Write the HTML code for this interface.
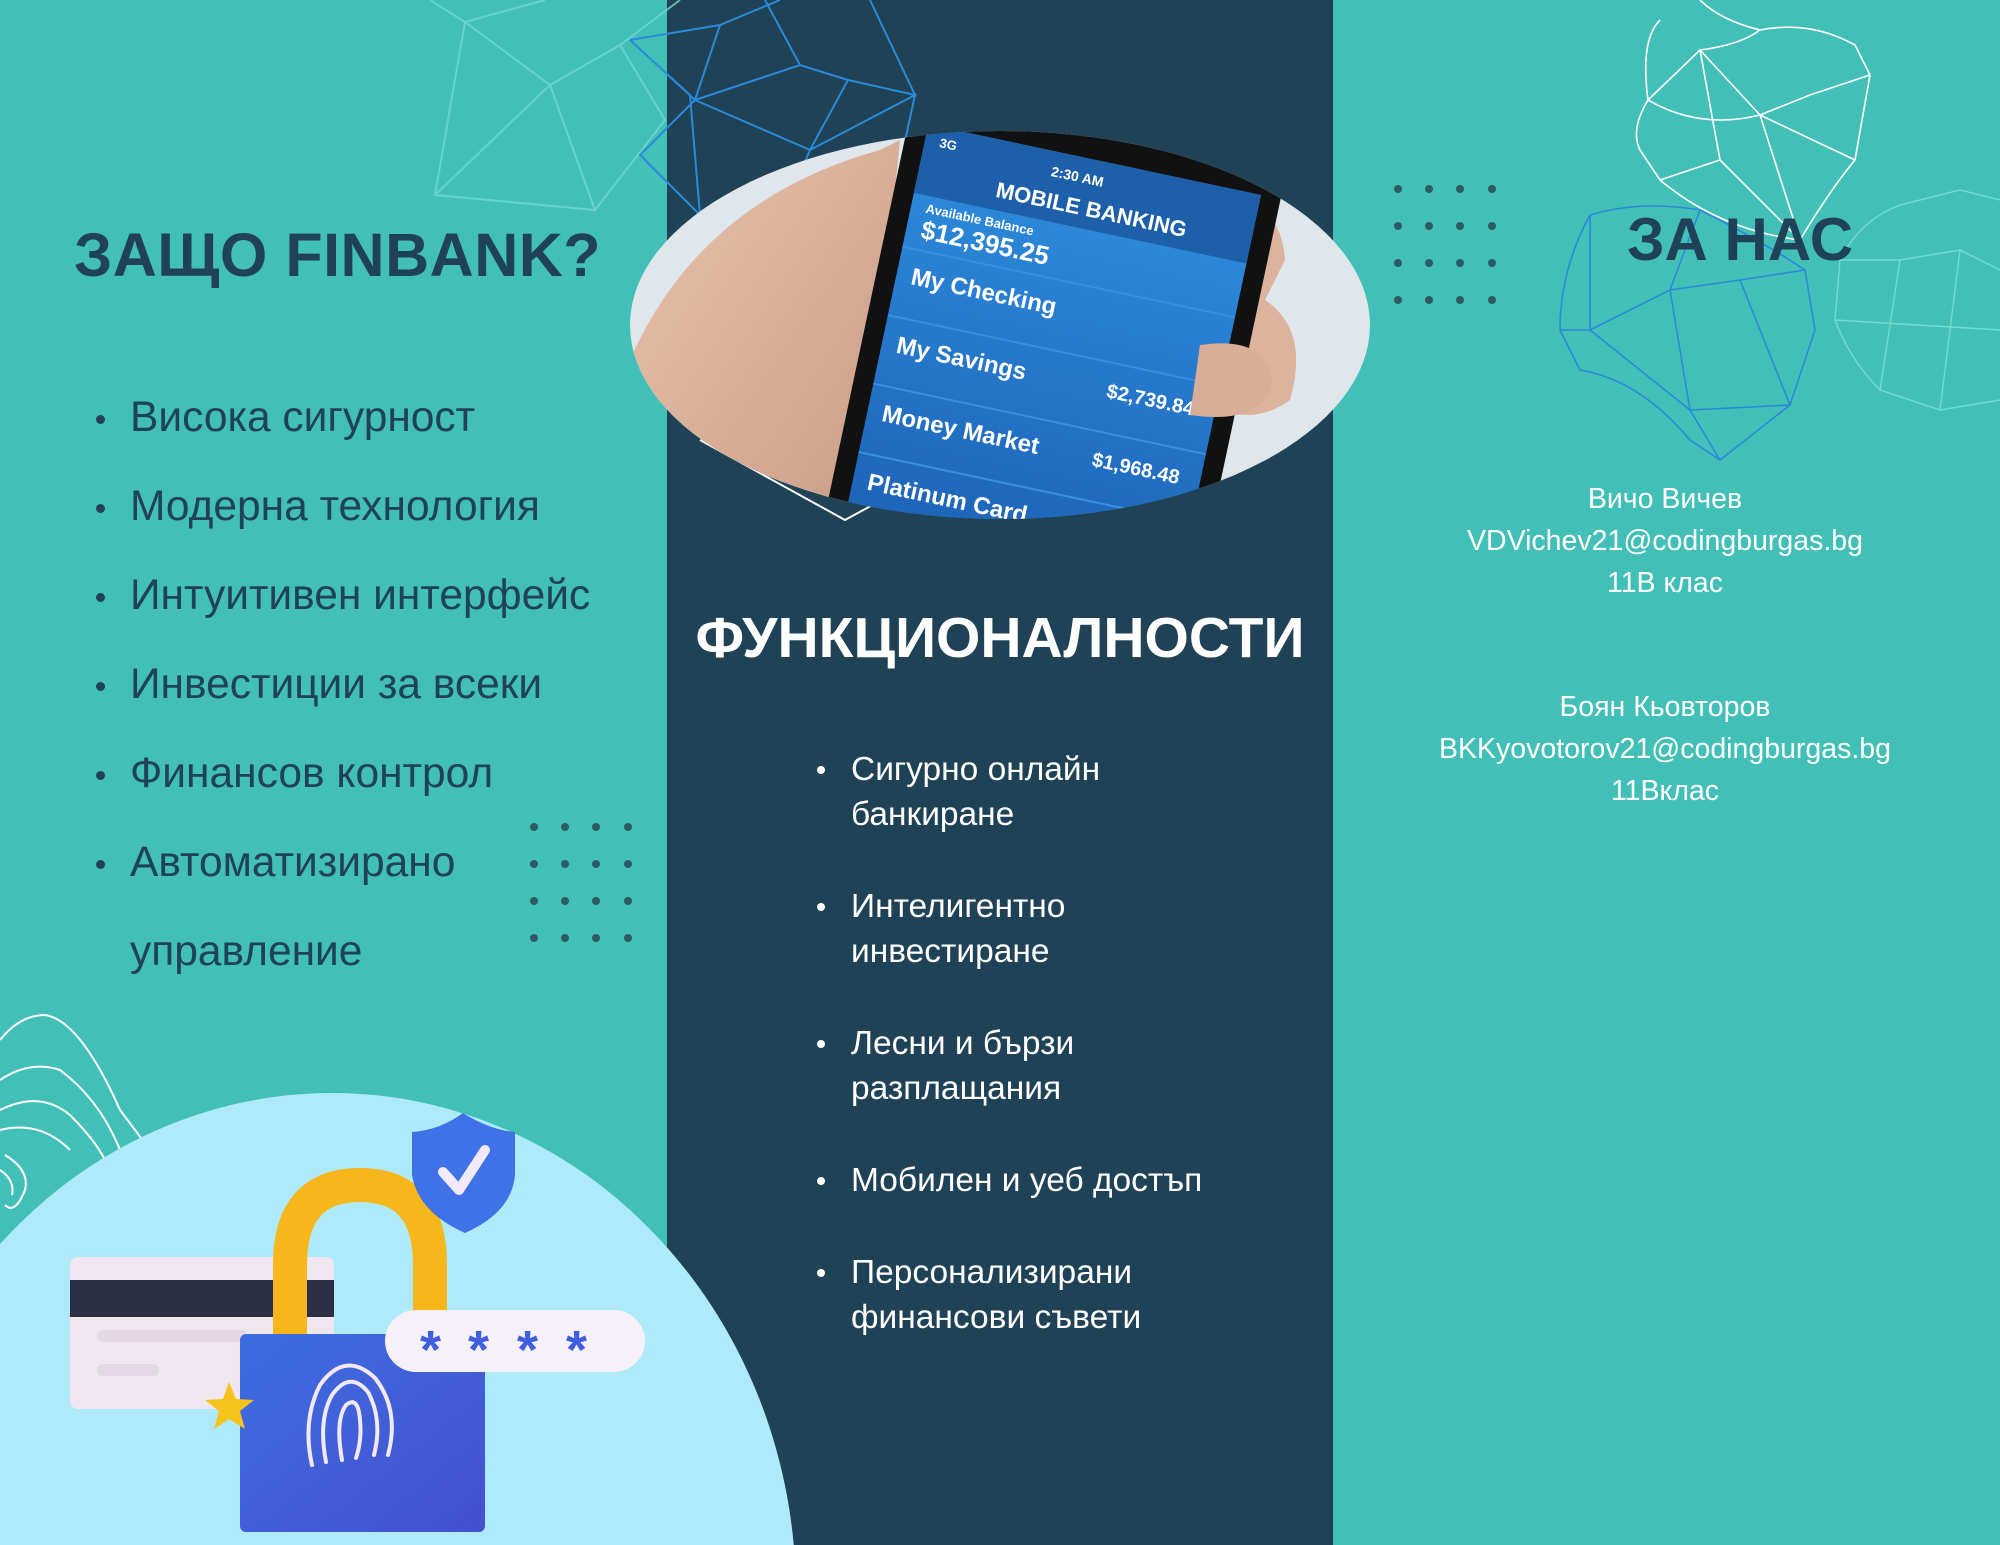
<!DOCTYPE html>
<html><head><meta charset="utf-8"><style>
*{margin:0;padding:0;box-sizing:border-box}
html,body{width:2000px;height:1545px;overflow:hidden}
body{position:relative;background:#42c0b8;font-family:"Liberation Sans","DejaVu Sans",sans-serif}
.abs{position:absolute}
svg{position:absolute;left:0;top:0}
.h1{left:74px;top:220px;font-size:61px;font-weight:bold;color:#1f4256;letter-spacing:0.5px}
ul.l1{left:96px;top:390px;list-style:none;color:#1f4256;font-size:42.5px}
ul.l1 li{height:89px;line-height:56px;position:relative;padding-left:34px}
ul.l1 li:before{content:"";position:absolute;left:0;top:25px;width:9px;height:9px;border-radius:50%;background:#1f4256}
.h2{left:690px;top:605px;width:620px;text-align:center;font-size:57px;font-weight:bold;color:#fff}
ul.l2{left:815px;top:747px;list-style:none;color:#fff;font-size:33.5px;line-height:45px}
ul.l2 li{position:relative;padding-left:36px;margin-bottom:47px}
ul.l2 li:before{content:"";position:absolute;left:2px;top:19px;width:8px;height:8px;border-radius:50%;background:#fff}
.h3{left:1540px;top:205px;width:400px;text-align:center;font-size:60px;font-weight:bold;color:#1f4256}
.info{left:1400px;width:530px;text-align:center;color:#fff;font-size:28.5px;line-height:42px}
</style></head><body>
<svg width="2000" height="1545" viewBox="0 0 2000 1545">
<defs>
<clipPath id="ph"><ellipse cx="1000" cy="325" rx="370" ry="194"/></clipPath>
<linearGradient id="sk" x1="0" y1="0" x2="1" y2="1"><stop offset="0" stop-color="#e8c4ae"/><stop offset="1" stop-color="#c99a84"/></linearGradient>
<linearGradient id="bl" x1="0" y1="0" x2="0" y2="1"><stop offset="0" stop-color="#2f8fe0"/><stop offset="1" stop-color="#1a5bb0"/></linearGradient>
<linearGradient id="lk" x1="0" y1="0" x2="1" y2="1"><stop offset="0" stop-color="#3d6ee0"/><stop offset="1" stop-color="#4550d0"/></linearGradient>
<g id="dg"><circle cx="0" cy="0" r="4"/><circle cx="31" cy="0" r="4"/><circle cx="62" cy="0" r="4"/><circle cx="94" cy="0" r="4"/></g>
</defs>
<rect x="667" y="0" width="666" height="1545" fill="#1f4256"/>
<g fill="none" stroke="#6fd6d0" stroke-width="2" opacity=".8">
<path d="M430 0 L465 22 L435 195 L595 210 L550 85 L465 22 M550 85 L620 45 L680 0 M550 85 L595 210 L665 120 L620 45 M465 22 L545 0 M435 195 L550 85"/>
</g>
<g fill="none" stroke="#2a8ad8" stroke-width="2">
<path d="M630 40 L720 25 L780 0 M720 25 L695 100 L630 40 L690 95 L700 215 M695 100 L800 65 L848 80 L810 150 L695 100 M800 65 L765 0 M848 80 L915 95 L870 0 M810 150 L915 95 L890 210 M810 150 L785 210 M700 215 L640 155 L695 100"/>
</g>
<path d="M700 440 L845 520 L900 490" fill="none" stroke="#fff" stroke-width="2"/>
<g clip-path="url(#ph)">
<rect x="620" y="120" width="760" height="420" fill="#dfe6ec"/>
<path d="M630 360 Q700 200 880 150 L900 140 L860 540 L640 540 Z" fill="url(#sk)"/>
<path d="M1200 190 Q1280 190 1285 260 L1265 300 Q1310 330 1290 400 Q1250 430 1190 400 Z" fill="#dcb39c"/>
<g transform="translate(0,40) rotate(12 1050 330)">
<rect x="860" y="90" width="380" height="520" rx="25" fill="#111"/>
<rect x="880" y="115" width="340" height="480" fill="url(#bl)"/>
<rect x="880" y="115" width="340" height="70" fill="#1d5fa8"/>
<g fill="none" stroke="#3a8ee0" stroke-width="2"><path d="M880 240 H1220 M880 310 H1220 M880 380 H1220 M880 450 H1220"/></g>
<g fill="#fff" font-family="Liberation Sans" font-weight="bold">
<text x="895" y="135" font-size="13">3G</text>
<text x="1010" y="140" font-size="14">2:30 AM</text>
<text x="960" y="172" font-size="22">MOBILE BANKING</text>
<text x="895" y="202" font-size="13">Available Balance</text>
<text x="895" y="228" font-size="26">$12,395.25</text>
<text x="895" y="275" font-size="24">My Checking</text>
<text x="895" y="345" font-size="24">My Savings</text>
<text x="1110" y="345" font-size="20">$2,739.84</text>
<text x="895" y="415" font-size="24">Money Market</text>
<text x="1110" y="415" font-size="20">$1,968.48</text>
<text x="895" y="485" font-size="24">Platinum Card</text>
<text x="1110" y="485" font-size="20">$3,247.06</text>
</g>
</g>
<path d="M1200 345 Q1270 335 1272 385 Q1260 425 1190 415 Z" fill="#d8ae98"/>
</g>
<g fill="#2d5a68">
<use href="#dg" x="534" y="827"/><use href="#dg" x="534" y="864"/><use href="#dg" x="534" y="901"/><use href="#dg" x="534" y="938"/>
<use href="#dg" x="1398" y="189"/><use href="#dg" x="1398" y="226"/><use href="#dg" x="1398" y="263"/><use href="#dg" x="1398" y="300"/>
</g>
<g fill="none" stroke="#fff" stroke-width="1.6">
<path d="M1660 20 Q1640 40 1648 100 Q1630 130 1640 150 L1660 180 Q1720 230 1800 240 Q1830 190 1855 160 L1870 75 L1855 45 Q1810 20 1760 30 Q1720 20 1700 0 M1648 100 Q1700 130 1760 115 L1810 95 L1870 75 M1648 100 L1700 50 L1760 115 L1800 240 M1700 50 Q1740 45 1760 30 M1760 115 L1855 160 M1700 50 L1720 160 L1660 180 M1720 160 L1800 240"/>
</g>
<g fill="none" stroke="#2a8ad8" stroke-width="1.6">
<path d="M1590 215 Q1560 270 1560 330 L1580 370 Q1640 380 1690 440 L1720 460 L1790 405 L1815 330 L1805 270 Q1760 240 1700 210 Q1640 200 1590 215 M1590 215 L1590 330 L1690 410 L1720 460 M1590 330 L1670 290 L1740 280 L1805 270 M1670 290 L1690 410 L1790 405 M1740 280 L1790 405 M1700 210 L1670 290 M1560 330 L1590 330"/>
</g>
<g fill="none" stroke="#7fe0d8" stroke-width="1.4" opacity=".8">
<path d="M1900 205 Q1860 220 1840 260 L1835 320 Q1850 360 1880 390 L1940 410 L2000 400 M1900 205 L1960 190 L2000 200 M1840 260 L1900 260 L1960 250 L2000 270 M1900 260 L1880 390 M1960 250 L1940 410 M1835 320 L2000 330"/>
</g>
<g fill="none" stroke="#fff" stroke-width="2">
<path d="M0 1040 Q20 1015 45 1015 Q80 1020 120 1110 L150 1150"/>
<path d="M0 1080 Q30 1060 60 1070 Q100 1100 120 1150"/>
<path d="M0 1110 Q40 1090 70 1115 Q95 1140 105 1160"/>
<path d="M0 1130 Q40 1120 70 1150"/>
<path d="M5 1155 Q30 1170 25 1190 Q15 1215 5 1205"/>
<path d="M0 1170 Q15 1180 12 1195"/>
</g>
<ellipse cx="332" cy="1594" rx="464" ry="501" fill="#aeeafa"/>
<rect x="70" y="1257" width="264" height="152" rx="8" fill="#efe6f0"/>
<rect x="70" y="1280" width="264" height="37" fill="#2d2f44"/>
<rect x="97" y="1330" width="150" height="12" rx="6" fill="#e4d8e6"/>
<rect x="97" y="1364" width="62" height="12" rx="6" fill="#e4d8e6"/>
<path d="M290 1335 V1265 Q290 1185 360 1185 Q430 1185 430 1265 V1335" fill="none" stroke="#f7b61c" stroke-width="34"/>
<path d="M463 1113 Q490 1130 515 1132 L515 1175 Q512 1212 465 1233 Q418 1212 412 1175 L412 1132 Q440 1130 463 1113 Z" fill="#3f72e6"/>
<path d="M443 1172 L459 1190 L485 1150" fill="none" stroke="#f2eaf8" stroke-width="10" stroke-linecap="round" stroke-linejoin="round"/>
<rect x="240" y="1334" width="245" height="198" rx="6" fill="url(#lk)"/>
<g fill="none" stroke="#f3e8f6" stroke-width="4" stroke-linecap="round">
<path d="M312 1465 Q302 1420 320 1385 Q345 1350 375 1378 Q400 1410 388 1455"/>
<path d="M326 1462 Q318 1420 332 1395 Q350 1370 368 1392 Q383 1420 374 1455"/>
<path d="M342 1460 Q335 1420 346 1405 Q358 1395 360 1420 Q362 1440 356 1458"/>
</g>
<path d="M229 1382 L236 1399 L254 1400 L240 1411 L245 1429 L229 1419 L214 1429 L219 1411 L205 1400 L223 1399 Z" fill="#f8c21c"/>
<rect x="385" y="1310" width="260" height="62" rx="31" fill="#f6f0f8"/>
<g fill="#3d5fe0" font-family="Liberation Sans" font-weight="bold" font-size="54">
<text x="420" y="1368">*</text><text x="468" y="1368">*</text><text x="517" y="1368">*</text><text x="566" y="1368">*</text>
</g>
</svg>

<div class="abs h1">ЗАЩО FINBANK?</div>
<ul class="abs l1">
<li>Висока сигурност</li>
<li>Модерна технология</li>
<li>Интуитивен интерфейс</li>
<li>Инвестиции за всеки</li>
<li>Финансов контрол</li>
<li>Автоматизирано<br><span style="display:block;margin-top:33px">управление</span></li>
</ul>
<div class="abs h2">ФУНКЦИОНАЛНОСТИ</div>
<ul class="abs l2">
<li>Сигурно онлайн<br>банкиране</li>
<li>Интелигентно<br>инвестиране</li>
<li>Лесни и бързи<br>разплащания</li>
<li>Мобилен и уеб достъп</li>
<li style="margin-top:2px">Персонализирани<br>финансови съвети</li>
</ul>
<div class="abs h3">ЗА НАС</div>
<div class="abs info" style="top:478px">Вичо Вичев<br>VDVichev21@codingburgas.bg<br>11В клас</div>
<div class="abs info" style="top:686px">Боян Кьовторов<br>BKKyovotorov21@codingburgas.bg<br>11Вклас</div>
</body></html>
